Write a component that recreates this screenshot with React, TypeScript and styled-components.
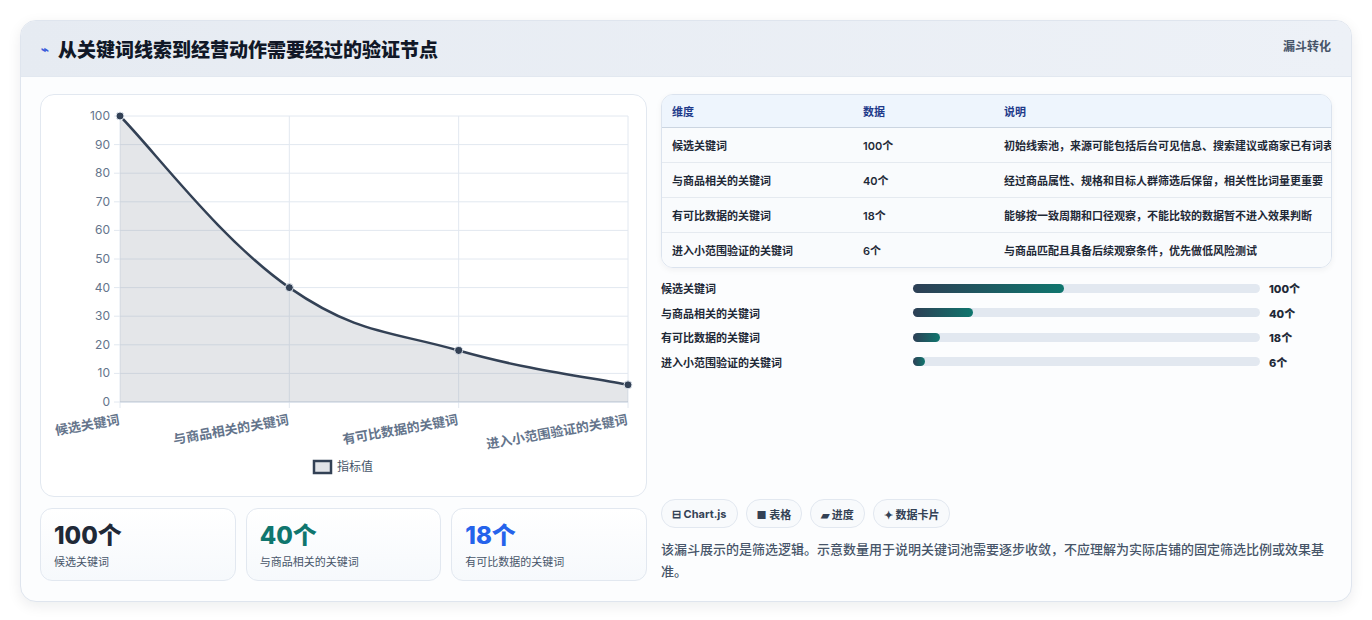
import styled, { createGlobalStyle } from "styled-components";

const Global = createGlobalStyle`
  body { margin: 0; background: #f8fafc; font-family: "Inter", "Noto Sans CJK SC", sans-serif; }
`;

const Page = styled.div`
  width: 1372px;
  height: 620px;
  padding: 20px;
  box-sizing: border-box;
  background: #fff;
`;

const Card = styled.div`
  height: 580px;
  border: 1px solid #dfe5ee;
  border-radius: 16px;
  box-shadow: 0 4px 14px rgba(15, 23, 42, 0.08);
  overflow: hidden;
  display: flex;
  flex-direction: column;
  background: #fcfdfe;
`;

const Header = styled.div`
  height: 55px;
  flex-shrink: 0;
  padding: 0 20px;
  display: flex;
  align-items: center;
  justify-content: space-between;
  background: linear-gradient(90deg, #e6ebf2, #edf1f7);
  border-bottom: 1px solid #e2e8f0;
`;

const Title = styled.h2`
  margin: 0;
  font-size: 19px;
  font-weight: 800;
  color: #111827;
  display: flex;
  align-items: center;
  gap: 9px;
  font-family: "Noto Sans CJK SC", sans-serif;
`;

const Tag = styled.span`
  align-self: flex-start;
  margin-top: 16px;
  font-size: 12px;
  font-weight: 700;
  color: #475569;
`;

const Body = styled.div`
  flex: 1;
  padding: 17px 19px 19px;
  display: grid;
  grid-template-columns: 607px 1fr;
  gap: 14px;
`;

const Col = styled.div`
  display: flex;
  flex-direction: column;
`;

const ChartBox = styled.div`
  height: 403px;
  border: 1px solid #e2e8f0;
  border-radius: 14px;
  background: #fff;
  box-sizing: border-box;
`;

const Stats = styled.div`
  margin-top: 11px;
  display: grid;
  grid-template-columns: repeat(3, 1fr);
  gap: 10px;
`;

const Stat = styled.div`
  height: 73px;
  box-sizing: border-box;
  border: 1px solid #e2e8f0;
  border-radius: 12px;
  padding: 12px 13px;
  background: linear-gradient(180deg, #fff, #f6f9fc);
`;

const StatNum = styled.div<{ $c: string }>`
  font-size: 24px;
  font-weight: 800;
  color: ${(p) => p.$c};
  line-height: 30px;
`;

const StatLabel = styled.div`
  font-size: 11px;
  color: #475569;
  margin-top: 2px;
`;

const Table = styled.table`
  width: 100%;
  table-layout: fixed;
  border-collapse: separate;
  border-spacing: 0;
  border: 1px solid #dbe3ee;
  border-radius: 12px;
  overflow: hidden;
  font-size: 11px;
  box-shadow: 0 2px 6px rgba(15, 23, 42, 0.05);
`;

const Th = styled.th<{ $w?: number }>`
  text-align: left;
  height: 32px;
  padding: 0 10px;
  background: #eef5fd;
  color: #1e3a8a;
  font-weight: 700;
  border-bottom: 1px solid #cbd5e1;
  width: ${(p) => (p.$w ? p.$w + "px" : "auto")};
`;

const Td = styled.td`
  height: 34px;
  padding: 0 10px;
  color: #1f2937;
  font-weight: 600;
  white-space: nowrap;
  background: #f9fbfd;
  border-bottom: 1px solid #e5eaf0;
  tr:last-child & { border-bottom: none; }
`;

const Bars = styled.div`
  margin-top: 12px;
  display: flex;
  flex-direction: column;
  gap: 11px;
`;

const BarRow = styled.div`
  display: grid;
  grid-template-columns: 252px 347px 1fr;
  align-items: center;
  font-size: 11px;
  font-weight: 600;
  color: #1f2937;
  height: 13.5px;
`;

const Track = styled.div`
  height: 9px;
  border-radius: 5px;
  background: #e2e8f0;
`;

const Fill = styled.div`
  height: 100%;
  border-radius: 5px;
  background: linear-gradient(90deg, #2d3f55, #0f766e);
`;

const BarVal = styled.span`
  padding-left: 9px;
  font-weight: 800;
`;

const Chips = styled.div`
  margin-top: auto;
  display: flex;
  gap: 8px;
`;

const Chip = styled.span`
  height: 27px;
  padding: 0 10px;
  display: flex;
  align-items: center;
  gap: 4px;
  border: 1px solid #e2e8f0;
  border-radius: 14px;
  background: #f8fafc;
  font-size: 11px;
  font-weight: 700;
  color: #334155;
`;

const Note = styled.p`
  margin: 10px 0 0;
  font-size: 13px;
  line-height: 22px;
  color: #475569;
  font-weight: 500;
`;

const rows = [
  ["候选关键词", 100, "初始线索池，来源可能包括后台可见信息、搜索建议或商家已有词表"],
  ["与商品相关的关键词", 40, "经过商品属性、规格和目标人群筛选后保留，相关性比词量更重要"],
  ["有可比数据的关键词", 18, "能够按一致周期和口径观察，不能比较的数据暂不进入效果判断"],
  ["进入小范围验证的关键词", 6, "与商品匹配且具备后续观察条件，优先做低风险测试"],
] as const;

const X0 = 79, X1 = 587, Y0 = 21, Y1 = 307;
const px = (i: number) => X0 + ((X1 - X0) * i) / 3;
const py = (v: number) => Y1 - ((Y1 - Y0) * v) / 100;

function curve() {
  const p = rows.map((r, i) => [px(i), py(r[1])]);
  let d = `M${p[0][0]},${p[0][1]}`;
  for (let i = 0; i < p.length - 1; i++) {
    const a = p[i - 1] || p[i], b = p[i], c = p[i + 1], e = p[i + 2] || c;
    const t = 0.2;
    d += ` C${b[0] + (c[0] - a[0]) * t},${b[1] + (c[1] - a[1]) * t} ${c[0] - (e[0] - b[0]) * t},${c[1] - (e[1] - b[1]) * t} ${c[0]},${c[1]}`;
  }
  return d;
}

const Chart = () => {
  const line = curve();
  const ticks = [0, 10, 20, 30, 40, 50, 60, 70, 80, 90, 100];
  return (
    <svg width="605" height="401" style={{ display: "block" }} fontFamily="Inter, 'Noto Sans CJK SC', sans-serif">
      {ticks.map((t) => (
        <g key={t}>
          <line x1={X0 - 6} x2={X1} y1={py(t)} y2={py(t)} stroke="#e2e8f0" />
          <text x={X0 - 10} y={py(t) + 4} textAnchor="end" fontSize="12" fill="#64748b">{t}</text>
        </g>
      ))}
      {[0, 1, 2, 3].map((i) => (
        <line key={i} x1={px(i)} x2={px(i)} y1={Y0} y2={Y1 + 6} stroke="#e2e8f0" />
      ))}
      <line x1={X0} x2={X1} y1={Y1} y2={Y1} stroke="#cbd5e1" />
      <path d={`${line} L${X1},${Y1} L${X0},${Y1} Z`} fill="rgba(148,156,166,0.25)" />
      <path d={line} fill="none" stroke="#334155" strokeWidth="2.5" />
      {rows.map((r, i) => (
        <circle key={i} cx={px(i)} cy={py(r[1])} r="4" fill="#334155" stroke="#e2e8f0" strokeWidth="1" />
      ))}
      {rows.map((r, i) => (
        <text key={i} x={px(i)} y={Y1 + 22} textAnchor="end" fontSize="13" fontWeight="600" fill="#64748b"
          transform={`rotate(-10 ${px(i)} ${Y1 + 22})`}>{r[0]}</text>
      ))}
      <rect x="273" y="366" width="17" height="12" fill="#e2e4e8" stroke="#334155" strokeWidth="2.5" />
      <text x="296" y="376" fontSize="12" fill="#475569">指标值</text>
    </svg>
  );
};

export default function App() {
  return (
    <Page>
      <Global />
      <Card>
        <Header>
          <Title><span style={{ color: "#3b5bdb", fontSize: 13 }}>⌁</span>从关键词线索到经营动作需要经过的验证节点</Title>
          <Tag>漏斗转化</Tag>
        </Header>
        <Body>
          <Col>
            <ChartBox><Chart /></ChartBox>
            <Stats>
              <Stat><StatNum $c="#1f2937">100个</StatNum><StatLabel>候选关键词</StatLabel></Stat>
              <Stat><StatNum $c="#0f766e">40个</StatNum><StatLabel>与商品相关的关键词</StatLabel></Stat>
              <Stat><StatNum $c="#2563eb">18个</StatNum><StatLabel>有可比数据的关键词</StatLabel></Stat>
            </Stats>
          </Col>
          <Col>
            <Table>
              <thead>
                <tr><Th $w={171}>维度</Th><Th $w={121}>数据</Th><Th>说明</Th></tr>
              </thead>
              <tbody>
                {rows.map((r) => (
                  <tr key={r[0]}><Td>{r[0]}</Td><Td>{r[1]}个</Td><Td>{r[2]}</Td></tr>
                ))}
              </tbody>
            </Table>
            <Bars>
              {rows.map((r) => (
                <BarRow key={r[0]}>
                  <span>{r[0]}</span>
                  <Track><Fill style={{ width: Math.max(r[1] * 0.435, 3.5) + "%" }} /></Track>
                  <BarVal>{r[1]}个</BarVal>
                </BarRow>
              ))}
            </Bars>
            <Chips>
              <Chip>⊟ Chart.js</Chip>
              <Chip>■ 表格</Chip>
              <Chip>▰ 进度</Chip>
              <Chip>✦ 数据卡片</Chip>
            </Chips>
            <Note>该漏斗展示的是筛选逻辑。示意数量用于说明关键词池需要逐步收敛，不应理解为实际店铺的固定筛选比例或效果基准。</Note>
          </Col>
        </Body>
      </Card>
    </Page>
  );
}
